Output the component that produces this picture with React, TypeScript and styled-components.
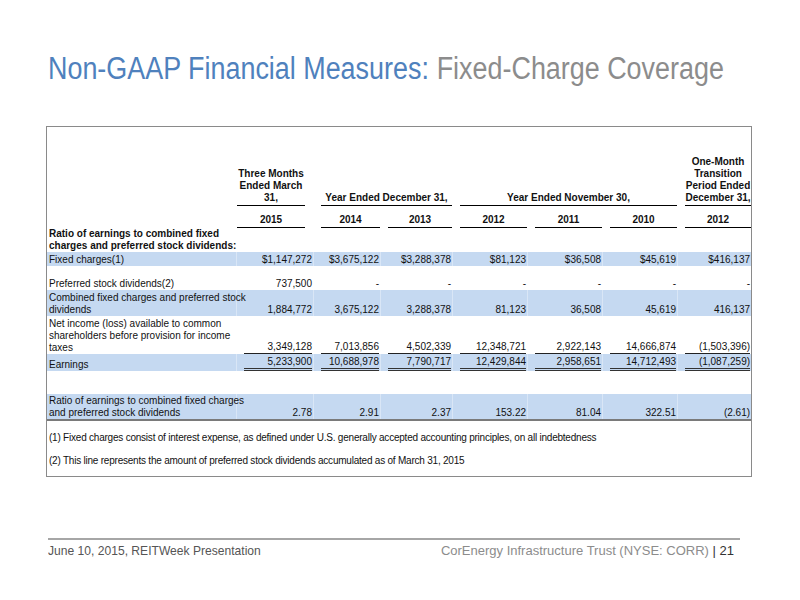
import styled, { createGlobalStyle } from "styled-components";

const GlobalStyle = createGlobalStyle`
  html, body {
    margin: 0;
    padding: 0;
    background: #ffffff;
  }
  body {
    font-family: "Liberation Sans", Arial, sans-serif;
  }
`;

const Page = styled.div`
  width: 800px;
  height: 600px;
  display: flex;
  flex-direction: column;
  padding: 0 48px 0 46px;
  box-sizing: border-box;
`;

// no condensed face installed, so the narrow slide font is squeezed
const Title = styled.h1`
  margin: 52px 0 0 2px;
  font-weight: normal;
  font-size: 31px;
  line-height: 34px;
  white-space: nowrap;
  color: #4f81bd;
  transform: scaleX(0.868);
  transform-origin: left center;

  .sub {
    color: #8c8c8c;
    margin-left: 9px;
  }
`;

const Box = styled.div`
  margin-top: 40px;
  width: 706px;
  height: 351px;
  border: 1px solid #8a8a8a;
  box-sizing: border-box;
`;

const Table = styled.table`
  width: 704px;
  table-layout: fixed;
  border-collapse: collapse;
  font-size: 10px;
  line-height: 12px;
  color: #111;
`;

const Col = styled.col<{ $w: number }>`
  width: ${(p) => p.$w}px;
`;

const Row = styled.tr<{ $h: number; $shade?: boolean; $rule?: boolean }>`
  height: ${(p) => p.$h}px;
  background: ${(p) => (p.$shade ? "#c5d9f1" : "transparent")};
  border-bottom: ${(p) => (p.$rule ? "2px solid #7a7a7a" : "none")};
`;

const Head = styled.td`
  padding: 0;
  vertical-align: bottom;
  text-align: center;
  font-weight: bold;
`;

const HeadText = styled.div<{ $first?: boolean }>`
  margin: ${(p) => (p.$first ? "0 8px 0 1px" : "0 0 0 8px")};
  border-bottom: 1px solid #000;
  padding-bottom: 1px;
`;

const Label = styled.td<{ $bold?: boolean }>`
  padding: 0 0 0 2px;
  vertical-align: bottom;
  text-align: left;
  white-space: nowrap;
  font-weight: ${(p) => (p.$bold ? "bold" : "normal")};
`;

const Num = styled.td`
  padding: 0 1px 0 0;
  vertical-align: bottom;
  text-align: right;
  white-space: nowrap;
  box-shadow: inset 1px 0 0 rgba(255, 255, 255, 0.35);
`;

const Line = styled.div<{ $kind: "single" | "double" }>`
  margin-left: 8px;
  border-bottom: ${(p) => (p.$kind === "double" ? "3px double #333" : "1px solid #222")};
`;

const Note = styled.td<{ $top: number }>`
  padding: ${(p) => p.$top}px 0 0 2px;
  vertical-align: top;
  white-space: nowrap;
  letter-spacing: -0.22px;
`;

const Footer = styled.div`
  margin-top: auto;
  margin-bottom: 42px;
  margin-left: 2px;
  width: 692px;
  border-top: 2px solid #a6a6a6;
  padding: 3px 6px 0 0;
  box-sizing: border-box;
  display: flex;
  justify-content: space-between;
  font-size: 13px;
  color: #555;
`;

const FootText = styled.span<{ $side: "left" | "right" }>`
  display: inline-block;
  white-space: nowrap;
  transform: scaleX(${(p) => (p.$side === "left" ? 0.93 : 1)});
  transform-origin: ${(p) => p.$side} center;
  color: ${(p) => (p.$side === "left" ? "#555" : "#8c8c8c")};

  b {
    font-weight: normal;
    color: #333;
  }
`;

const widths = [189, 77, 67, 72, 75, 75, 75, 74];

type DataRow = {
  label: string[];
  values: string[];
  h: number;
  shade?: boolean;
  line?: "single" | "double";
};

const rows: DataRow[] = [
  {
    label: ["Fixed charges(1)"],
    values: ["$1,147,272", "$3,675,122", "$3,288,378", "$81,123", "$36,508", "$45,619", "$416,137"],
    h: 14,
    shade: true,
  },
  {
    label: ["Preferred stock dividends(2)"],
    values: ["737,500", "-", "-", "-", "-", "-", "-"],
    h: 24,
  },
  {
    label: ["Combined fixed charges and preferred stock", "dividends"],
    values: ["1,884,772", "3,675,122", "3,288,378", "81,123", "36,508", "45,619", "416,137"],
    h: 26,
    shade: true,
  },
  {
    label: ["Net income (loss) available to common", "shareholders before provision for income", "taxes"],
    values: ["3,349,128", "7,013,856", "4,502,339", "12,348,721", "2,922,143", "14,666,874", "(1,503,396)"],
    h: 38,
    line: "single",
  },
  {
    label: ["Earnings"],
    values: ["5,233,900", "10,688,978", "7,790,717", "12,429,844", "2,958,651", "14,712,493", "(1,087,259)"],
    h: 17,
    shade: true,
    line: "double",
  },
];

const renderLabel = (lines: string[]) =>
  lines.map((l, i) => (
    <span key={i}>
      {i > 0 && <br />}
      {l}
    </span>
  ));

const App = () => {
  return (
    <Page>
      <GlobalStyle />
      <Title>
        Non-GAAP Financial Measures:<span className="sub">Fixed-Charge Coverage</span>
      </Title>
      <Box>
        <Table>
          <colgroup>
            {widths.map((w, i) => (
              <Col key={i} $w={w} />
            ))}
          </colgroup>
          <tbody>
            <Row $h={79}>
              <Head />
              <Head>
                <HeadText $first>
                  Three Months
                  <br />
                  Ended March
                  <br />
                  31,
                </HeadText>
              </Head>
              <Head colSpan={2}>
                <HeadText>Year Ended December 31,</HeadText>
              </Head>
              <Head colSpan={3}>
                <HeadText>Year Ended November 30,</HeadText>
              </Head>
              <Head>
                <HeadText>
                  One-Month
                  <br />
                  Transition
                  <br />
                  Period Ended
                  <br />
                  December 31,
                </HeadText>
              </Head>
            </Row>
            <Row $h={22}>
              <Head />
              {["2015", "2014", "2013", "2012", "2011", "2010", "2012"].map((y, i) => (
                <Head key={i}>
                  <HeadText $first={i === 0}>{y}</HeadText>
                </Head>
              ))}
            </Row>
            <Row $h={23}>
              <Label $bold colSpan={2}>
                Ratio of earnings to combined fixed
                <br />
                charges and preferred stock dividends:
              </Label>
              <td colSpan={6} />
            </Row>
            {rows.map((r, i) => (
              <Row key={i} $h={r.h} $shade={r.shade}>
                <Label>{renderLabel(r.label)}</Label>
                {r.values.map((v, j) => (
                  <Num key={j}>{r.line ? <Line $kind={r.line}>{v}</Line> : v}</Num>
                ))}
              </Row>
            ))}
            <Row $h={23}>
              <td colSpan={8} />
            </Row>
            <Row $h={26} $shade $rule>
              <Label>{renderLabel(["Ratio of earnings to combined fixed charges", "and preferred stock dividends"])}</Label>
              {["2.78", "2.91", "2.37", "153.22", "81.04", "322.51", "(2.61)"].map((v, j) => (
                <Num key={j}>{v}</Num>
              ))}
            </Row>
            <Row $h={30}>
              <Note colSpan={8} $top={11}>
                (1) Fixed charges consist of interest expense, as defined under U.S. generally accepted accounting
                principles, on all indebtedness
              </Note>
            </Row>
            <Row $h={24}>
              <Note colSpan={8} $top={5}>
                (2) This line represents the amount of preferred stock dividends accumulated as of March 31, 2015
              </Note>
            </Row>
          </tbody>
        </Table>
      </Box>
      <Footer>
        <FootText $side="left">June 10, 2015, REITWeek Presentation</FootText>
        <FootText $side="right">
          CorEnergy Infrastructure Trust (NYSE: CORR) <b>| 21</b>
        </FootText>
      </Footer>
    </Page>
  );
};

export default App;
